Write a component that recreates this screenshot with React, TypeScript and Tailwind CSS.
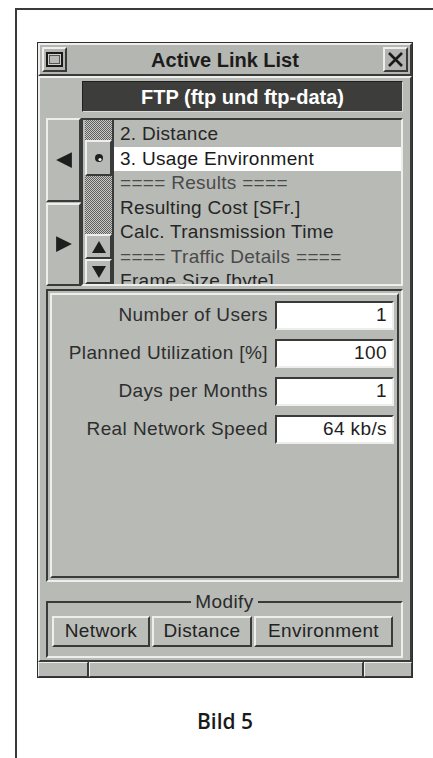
import React from "react";

const ui = { fontFamily: '"Liberation Sans", Arial, sans-serif' };

// raised and sunken bevels used all over the Motif-style window
const raised = "border-2 border-t-[#eeeeec] border-l-[#eeeeec] border-b-[#3a3a3a] border-r-[#3a3a3a]";
const sunken = "border-2 border-t-[#3a3a3a] border-l-[#3a3a3a] border-b-[#eeeeec] border-r-[#eeeeec]";
const stipple =
  "bg-[repeating-conic-gradient(#5f605d_0%_25%,#c9cac7_0%_50%)] bg-[length:2px_2px]";

function Tri({ dir, size = 16 }: { dir: "left" | "right" | "up" | "down"; size?: number }) {
  const pts = {
    left: "1,8 15,1 15,15",
    right: "15,8 1,1 1,15",
    up: "8,2 1,14 15,14",
    down: "8,14 1,2 15,2",
  }[dir];
  return (
    <svg width={size} height={size} viewBox="0 0 16 16">
      <polygon points={pts} fill="#1e1e1e" />
    </svg>
  );
}

const items = [
  { t: "2. Distance" },
  { t: "3. Usage Environment", sel: true },
  { t: "==== Results ====", sep: true },
  { t: "Resulting Cost [SFr.]" },
  { t: "Calc. Transmission Time" },
  { t: "==== Traffic Details ====", sep: true },
  { t: "Frame Size [byte]" },
];

const fields = [
  ["Number of Users", "1"],
  ["Planned Utilization [%]", "100"],
  ["Days per Months", "1"],
  ["Real Network Speed", "64 kb/s"],
];

const buttons = [
  { label: "Network", w: "w-[98px]" },
  { label: "Distance", w: "w-[100px]" },
  { label: "Environment", w: "w-[139px]" },
];

function WinButton({ close }: { close?: boolean }) {
  return (
    <div className={`w-[25px] h-[25px] ${raised} bg-[#b4b5b2] flex items-center justify-center`}>
      {close ? (
        <svg width="17" height="17" viewBox="0 0 17 17">
          <path d="M2 2 L15 15 M15 2 L2 15" stroke="#1a1a1a" strokeWidth="2.6" />
        </svg>
      ) : (
        <div className="w-[17px] h-[15px] border-2 border-[#1a1a1a] bg-[#cfd0cd] flex">
          <div className="m-[1px] flex-1 border border-[#555] bg-[#b9bab7]" />
        </div>
      )}
    </div>
  );
}

export default function App() {
  return (
    <div className="w-[433px] h-[758px] bg-white overflow-hidden" style={ui}>
      <div className="ml-[15px] mt-[8px] h-[750px] border-l-2 border-t-2 border-[#3a3a3a] pl-[20px] pt-[32px]">
        <div className="w-[376px] h-[636px] border border-[#2e2e2e] bg-[#b8bab6] flex flex-col text-[#262626]">
          {/* title bar */}
          <div className={`h-[33px] ${raised} flex items-center px-[2px] bg-[#b4b6b2]`}>
            <WinButton />
            <div className="flex-1 text-center font-bold text-[20px] text-[#1c1c1c]">Active Link List</div>
            <WinButton close />
          </div>

          <div className={`flex-1 flex flex-col ${raised} pl-[6px] pr-[7px]`}>
            <div className="ml-[36px] mt-[3px] h-[31px] bg-[#3d3d3c] border border-t-[#1f1f1f] border-l-[#1f1f1f] border-b-[#d8d8d8] border-r-[#d8d8d8] flex items-center justify-center text-white font-bold text-[20px]">
              FTP (ftp und ftp-data)
            </div>

            {/* list with page arrows */}
            <div className="mt-[6px] h-[168px] flex">
              <div className="w-[35px] flex flex-col gap-[1px]">
                <div className={`flex-1 ${raised} bg-[#b8bab6] flex items-center justify-center`}>
                  <Tri dir="left" size={18} />
                </div>
                <div className={`flex-1 ${raised} bg-[#b8bab6] flex items-center justify-center`}>
                  <Tri dir="right" size={18} />
                </div>
              </div>
              <div className={`flex-1 ${sunken} flex overflow-hidden`}>
                <div className="w-[29px] ml-[2px] flex flex-col border-r-2 border-[#3a3a3a]">
                  <div className={`h-[20px] ${stipple}`} />
                  <div className={`h-[36px] ${raised} bg-[#b8bab6] flex items-center justify-center`}>
                    <svg width="10" height="10" viewBox="0 0 10 10">
                      <circle cx="5" cy="5" r="4" fill="#1f1f1f" />
                      <circle cx="6" cy="6.5" r="1.6" fill="#f2f2f2" />
                    </svg>
                  </div>
                  <div className={`flex-1 ${stipple}`} />
                  <div className={`h-[25px] ${raised} bg-[#b8bab6] flex items-center justify-center`}>
                    <Tri dir="up" />
                  </div>
                  <div className={`h-[25px] ${raised} bg-[#b8bab6] flex items-center justify-center`}>
                    <Tri dir="down" />
                  </div>
                </div>
                <div className="flex-1 pt-[2px]">
                  {items.map((it) => (
                    <div
                      key={it.t}
                      className={`h-[24.5px] leading-[24px] pl-[6px] text-[19px] tracking-[0.3px] whitespace-nowrap ${
                        it.sel ? "bg-white text-[#1a1a1a]" : it.sep ? "text-[#4a4a4a]" : "text-[#262626]"
                      }`}
                    >
                      {it.t}
                    </div>
                  ))}
                </div>
              </div>
            </div>

            {/* parameter fields */}
            <div className={`mt-[3px] h-[293px] ${sunken} p-[2px]`}>
              <div className={`h-full ${raised} pt-[6px] pr-[3px] flex flex-col gap-[9px]`}>
                {fields.map(([label, value]) => (
                  <div key={label} className="flex items-center justify-end gap-[7px]">
                    <span className="text-[19px] tracking-[0.4px] text-[#2e2e2e]">{label}</span>
                    <div className={`w-[119px] h-[29px] ${sunken} bg-white flex items-center justify-end pr-[5px] text-[19px] tracking-[0.4px] text-[#1e1e1e]`}>
                      {value}
                    </div>
                  </div>
                ))}
              </div>
            </div>

            {/* Modify group */}
            <fieldset className="mt-[10px] border-2 border-t-[#3a3a3a] border-l-[#3a3a3a] border-b-[#eeeeec] border-r-[#eeeeec] px-[4px] pb-[9px]">
              <legend className="mx-auto px-[4px] text-[19px] leading-[20px] tracking-[0.4px] text-[#2a2a2a]">Modify</legend>
              <div className="flex gap-[2px] mt-[4px]">
                {buttons.map((b) => (
                  <div
                    key={b.label}
                    className={`${b.w} h-[31px] ${raised} bg-[#bbbdb9] flex items-center justify-center text-[19px] tracking-[0.4px] text-[#222]`}
                  >
                    {b.label}
                  </div>
                ))}
              </div>
            </fieldset>

            <div className="flex-1" />
          </div>

          {/* status bar */}
          <div className="h-[15px] flex gap-[1px] bg-[#3a3a3a]">
            <div className={`w-[50px] ${raised} border-[1px] bg-[#b8bab6]`} />
            <div className={`flex-1 ${raised} border-[1px] bg-[#b8bab6]`} />
            <div className={`w-[48px] ${raised} border-[1px] bg-[#b8bab6]`} />
          </div>
        </div>

        <div className="mt-[28px] w-[376px] text-center text-[21px] font-semibold text-[#1a1a1a]" style={{ fontFamily: '"Open Sans", sans-serif' }}>
          Bild 5
        </div>
      </div>
    </div>
  );
}
